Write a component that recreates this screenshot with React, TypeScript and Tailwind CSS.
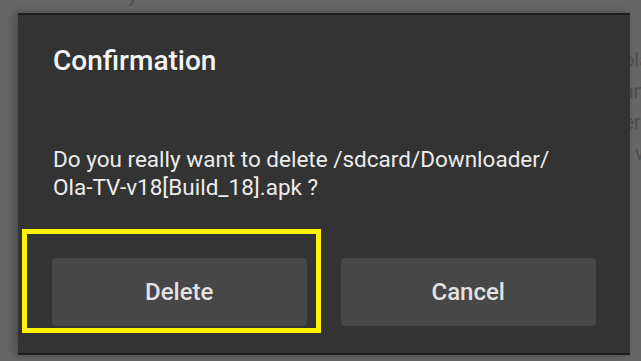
export default function App() {
  return (
    <div
      className="relative w-[641px] h-[361px] overflow-hidden bg-[#666666]"
      style={{ fontFamily: "Roboto, 'Noto Sans', sans-serif" }}
    >
      {/* dimmed page content behind the dialog */}
      <div className="absolute left-[128px] top-[-20px] text-[20px] text-[#4e4e4e]">y</div>
      <div className="absolute left-[612px] top-[48px] flex flex-col gap-[7px] text-[20px] leading-[24px] text-[#4e4e4e] whitespace-nowrap">
        <span>Tola</span>
        <span>Fand</span>
        <span>perf</span>
        <span>to v</span>
      </div>

      <div className="relative ml-[18px] mt-[13px] w-[612px] h-[342px] bg-[#333333] border-t-[2px] border-b-[2px] border-[#1c1c1c] shadow-[-4px_0_8px_rgba(0,0,0,0.25)] flex flex-col">
        <div className="pl-[35px] pt-[30px] text-[28px] leading-[32px] font-medium text-[#f4f4f4]">
          Confirmation
        </div>
        <div className="pl-[35px] pt-[68px] text-[22.5px] leading-[28px] text-[#ececec]">
          Do you really want to delete /sdcard/Downloader/
          <br />
          Ola-TV-v18[Build_18].apk ?
        </div>
        <div className="mt-auto mb-[27px] px-[34px] flex gap-[34px]">
          <button className="w-[255px] h-[68px] rounded-[4px] bg-[#474747] text-[24px] font-medium text-[#e2e2e2]">
            Delete
          </button>
          <button className="w-[256px] h-[68px] rounded-[4px] bg-[#474747] text-[24px] font-medium text-[#e2e2e2]">
            Cancel
          </button>
        </div>

        {/* focus highlight */}
        <div className="absolute left-[4px] top-[214px] w-[299px] h-[104px] border-[5px] border-[#fff200]" />
      </div>
    </div>
  );
}
